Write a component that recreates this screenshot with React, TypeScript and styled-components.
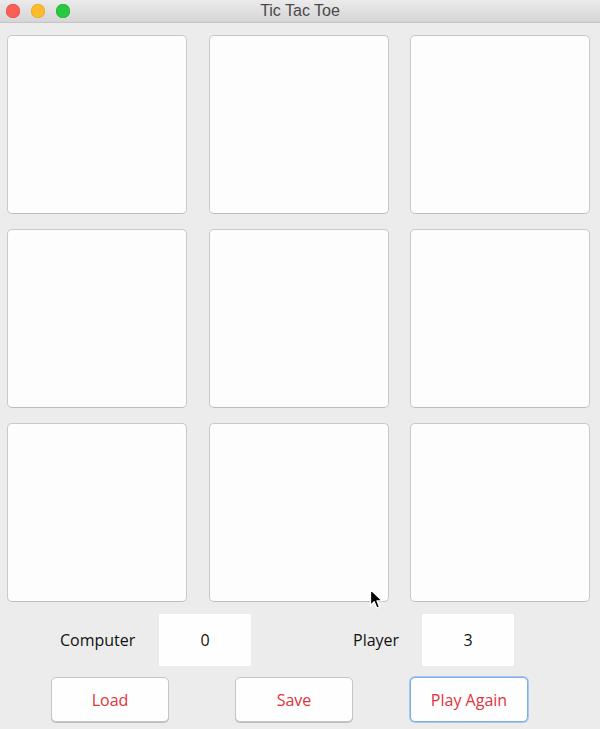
import React from "react";
import styled, { createGlobalStyle } from "styled-components";

const Global = createGlobalStyle`
  html, body { margin: 0; padding: 0; background: #ececec; }
  body { width: 600px; height: 729px; overflow: hidden; }
  #root { width: 600px; height: 729px; }
`;

const Window = styled.div`
  position: relative;
  width: 600px;
  height: 729px;
  background: #ececec;
  display: flex;
  flex-direction: column;
  font-family: "Open Sans", "Liberation Sans", sans-serif;
`;

const TitleBar = styled.div`
  height: 22px;
  border-bottom: 1px solid #c4c4c4;
  background: linear-gradient(#ebebeb, #d5d5d5);
  display: flex;
  align-items: center;
  position: relative;
  padding-left: 6px;
`;

const Light = styled.span<{ $c: string; $b: string }>`
  position: relative;
  z-index: 1;
  width: 14px;
  height: 14px;
  border-radius: 50%;
  background: ${(p) => p.$c};
  box-shadow: inset 0 0 0 0.5px ${(p) => p.$b};
  margin-right: 11px;
`;

const Title = styled.div`
  position: absolute;
  left: 0;
  right: 0;
  top: 0;
  line-height: 22px;
  text-align: center;
  font-family: "Liberation Sans", Arial, sans-serif;
  font-size: 16px;
  color: #4a4a4a;
`;

const Board = styled.div`
  display: grid;
  grid-template-columns: repeat(3, 180px);
  grid-template-rows: repeat(3, 179px);
  column-gap: 21.5px;
  row-gap: 15px;
  padding: 12px 0 0 7px;
`;

const Cell = styled.div`
  box-sizing: border-box;
  background: #fefdfe;
  border: 1px solid #c9c9c9;
  border-bottom-color: #bdbdbd;
  border-radius: 5px;
`;

const ScoreRow = styled.div`
  display: flex;
  align-items: center;
  margin-top: 12px;
  height: 52px;
  padding-left: 60px;
`;

const Label = styled.span<{ $ml?: number }>`
  font-size: 16px;
  color: #111;
  margin-left: ${(p) => p.$ml ?? 0}px;
  width: ${(p) => (p.$ml ? 69 : 99)}px;
`;

const ScoreBox = styled.div`
  width: 92px;
  height: 52px;
  background: #fefefe;
  display: flex;
  align-items: center;
  justify-content: center;
  font-size: 16px;
  color: #111;
`;

const ButtonRow = styled.div`
  display: flex;
  margin-top: 11px;
  padding-left: 51px;
`;

const Button = styled.button<{ $ml?: number; $focus?: boolean }>`
  box-sizing: border-box;
  width: 118px;
  height: 45px;
  margin-left: ${(p) => p.$ml ?? 0}px;
  background: #fefefe;
  border: 1px solid ${(p) => (p.$focus ? "#7eaee6" : "#c6c6c6")};
  box-shadow: ${(p) =>
    p.$focus ? "0 0 0 1px #a9c8ee" : "0 1px 0 #bcbcbc"};
  border-radius: 5px;
  color: #e0333c;
  font-family: "Open Sans", "Liberation Sans", sans-serif;
  font-size: 16px;
  padding: 0;
`;

const Cursor = styled.svg`
  position: absolute;
  left: 369px;
  top: 588px;
`;

export default function App() {
  return (
    <>
      <Global />
      <Window>
        <TitleBar>
          <Light $c="#fc5f57" $b="#e0443e" />
          <Light $c="#fdbc2e" $b="#dea123" />
          <Light $c="#28c840" $b="#1aab29" />
          <Title>Tic Tac Toe</Title>
        </TitleBar>
        <Board>
          {Array.from({ length: 9 }).map((_, i) => (
            <Cell key={i} />
          ))}
        </Board>
        <ScoreRow>
          <Label>Computer</Label>
          <ScoreBox>0</ScoreBox>
          <Label $ml={102}>Player</Label>
          <ScoreBox>3</ScoreBox>
        </ScoreRow>
        <ButtonRow>
          <Button>Load</Button>
          <Button $ml={66}>Save</Button>
          <Button $ml={57} $focus>
            Play Again
          </Button>
        </ButtonRow>
        <Cursor width="15" height="23" viewBox="0 0 15 23">
          <path
            d="M1.5 1.5 L1.5 17.5 L5.2 13.8 L7.8 20 L10.5 18.9 L8 12.8 L13.2 12.8 Z"
            fill="#000"
            stroke="#fff"
            strokeWidth="1.3"
            strokeLinejoin="round"
          />
        </Cursor>
      </Window>
    </>
  );
}
